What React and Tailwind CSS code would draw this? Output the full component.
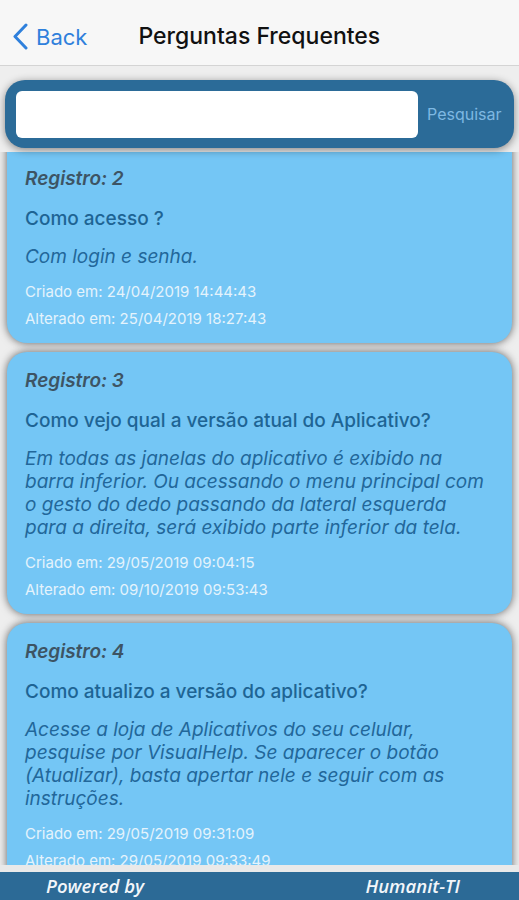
import React from "react";

const cards = [
  {
    id: 2,
    q: "Como acesso ?",
    a: "Com login e senha.",
    c: "24/04/2019 14:44:43",
    u: "25/04/2019 18:27:43",
  },
  {
    id: 3,
    q: "Como vejo qual a versão atual do Aplicativo?",
    a: "Em todas as janelas do aplicativo é exibido na barra inferior. Ou acessando o menu principal com o gesto do dedo passando da lateral esquerda para a direita, será exibido parte inferior da tela.",
    c: "29/05/2019 09:04:15",
    u: "09/10/2019 09:53:43",
  },
  {
    id: 4,
    q: "Como atualizo a versão do aplicativo?",
    a: "Acesse a loja de Aplicativos do seu celular, pesquise por VisualHelp. Se aparecer o botão (Atualizar), basta apertar nele e seguir com as instruções.",
    c: "29/05/2019 09:31:09",
    u: "29/05/2019 09:33:49",
  },
];

function Card({ d, first }) {
  return (
    <div
      className={`mx-[7px] shrink-0 rounded-[20px] bg-[#74c6f5] px-[18px] pb-[14px] shadow-[0_0_8px_rgba(0,0,0,0.6)] ${first ? "-mt-[24px] pt-[39px]" : "pt-[17px]"}`}
    >
      <div className="text-[19px] leading-[24px] font-semibold italic text-[#3d5464]">
        Registro: {d.id}
      </div>
      <div className="mt-[16px] text-[19px] leading-[24px] font-medium text-[#1e6494]">
        {d.q}
      </div>
      <div className="mt-[14px] pr-[4px] text-[19px] leading-[23px] italic text-[#22679a]">
        {d.a}
      </div>
      <div className="mt-[14px] text-[15px] leading-[20px] text-[#e4f3fc]">
        Criado em: {d.c}
      </div>
      <div className="mt-[7px] text-[15px] leading-[20px] text-[#e4f3fc]">
        Alterado em: {d.u}
      </div>
    </div>
  );
}

export default function App() {
  return (
    <div
      className="flex h-[900px] w-[519px] flex-col overflow-hidden bg-[#eeeeee]"
      style={{ fontFamily: "Inter, 'Noto Sans', sans-serif" }}
    >
      <div className="relative z-10 flex h-[66px] shrink-0 items-center border-b border-[#d4d4d4] bg-[#f7f7f7] pt-[8px]">
        <div className="flex items-center pl-[12px] text-[#2f80dc]">
          <svg width="17" height="27" viewBox="0 0 17 27" fill="none">
            <path d="M14 2 L3 13.5 L14 25" stroke="#2f80dc" strokeWidth="3" strokeLinecap="round" strokeLinejoin="round" />
          </svg>
          <span className="ml-[7px] text-[22px] leading-none">Back</span>
        </div>
        <div className="ml-[51px] text-[23px] font-medium leading-none text-[#111]">
          Perguntas Frequentes
        </div>
      </div>

      <div className="relative z-10 shrink-0 px-[5px] pt-[14px] pb-[4px]">
        <div className="flex h-[68px] items-center rounded-[20px] bg-[#2b6b98] pl-[11px] pr-[12px] shadow-[0_2px_8px_rgba(0,0,0,0.45)]">
          <div className="h-[47px] w-[402px] rounded-[6px] bg-white" />
          <span className="ml-[9px] text-[16px] text-[#7eb8e2]">Pesquisar</span>
        </div>
      </div>

      <div className="flex min-h-0 flex-1 flex-col gap-[9px] overflow-hidden">
        {cards.map((d, i) => (
          <Card key={d.id} d={d} first={i === 0} />
        ))}
      </div>

      <div className="h-[7px] shrink-0 bg-[#e9e9e9]" />
      <div
        className="flex h-[28px] shrink-0 items-center bg-[#2c6a96] text-[18.5px] font-semibold italic leading-none text-[#f2f6fa]"
        style={{ fontFamily: "'Open Sans', 'Noto Sans', sans-serif" }}
      >
        <span className="ml-[46px]">Powered by</span>
        <span className="ml-auto mr-[59px]">Humanit-TI</span>
      </div>
    </div>
  );
}
